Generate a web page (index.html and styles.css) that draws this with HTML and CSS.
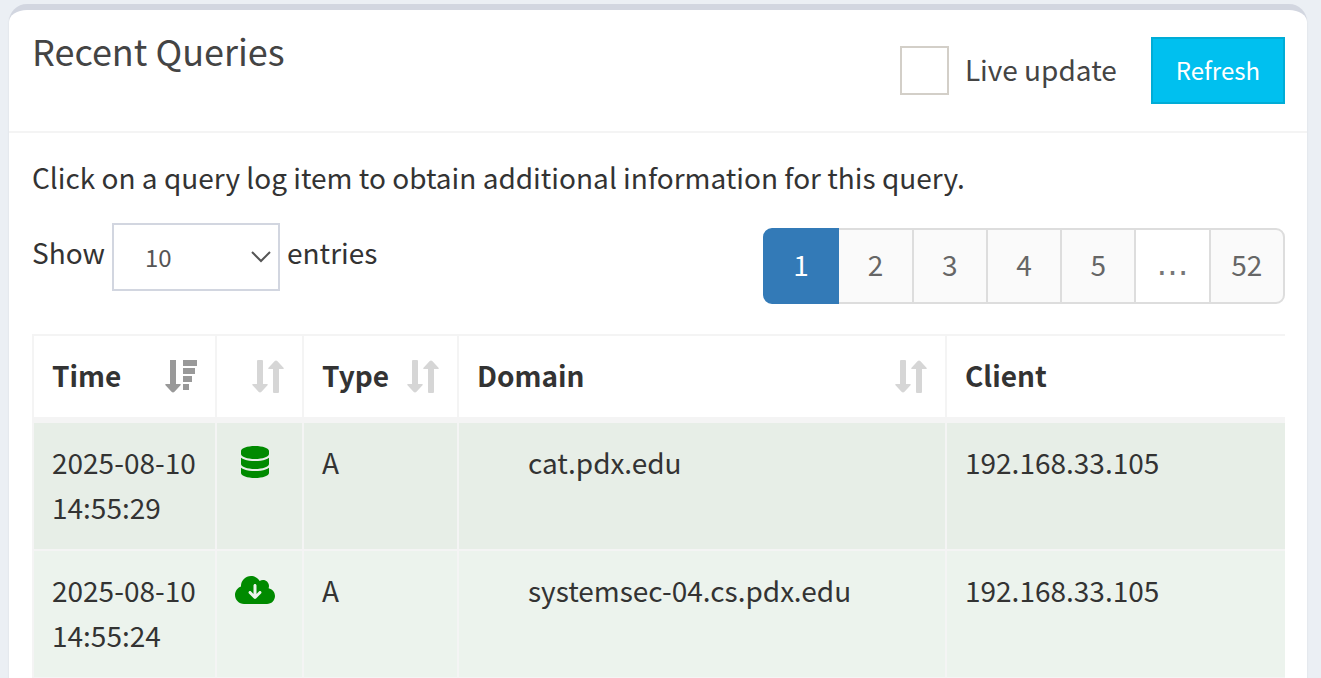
FILE: index.html
```html
<!DOCTYPE html>
<html lang="en">
<head>
<meta charset="utf-8">
<title>Recent Queries</title>
<link rel="stylesheet" href="styles.css">
</head>
<body>
<svg class="sprite" aria-hidden="true">
  <symbol id="sort" viewBox="0 0 32 34">
    <path d="M5 2a1 1 0 0 1 1-1h4a1 1 0 0 1 1 1v23h4q1.500 0 .5 1.200L9.500 32.800Q8 34.400 6.500 32.800L.5 26.200Q-.5 25 1 25h4z"/>
    <path d="M21 33a1 1 0 0 0 1 1h4a1 1 0 0 0 1-1V10h4q1.500 0 .5-1.200L25.500 2.200Q24 .6 22.500 2.200L16.500 8.800Q15.500 10 17 10h4z"/>
  </symbol>
  <symbol id="sort-desc" viewBox="0 0 32 34">
    <path d="M5 1h6v24h4q1.500 0 .5 1.200L9.500 32.800Q8 34.400 6.500 32.800L.5 26.200Q-.5 25 1 25h4zM18 1h14v6H18zM18 9h12v6H18zM18 17h9v6h-9zM18 25h6v6h-6z"/>
  </symbol>
  <symbol id="database" viewBox="0 0 448 512">
    <path d="M448 80v48c0 44.200-100.300 80-224 80S0 172.200 0 128V80C0 35.800 100.300 0 224 0S448 35.800 448 80zM393.200 214.700c20.800-7.400 39.900-16.900 54.800-28.600V288c0 44.200-100.300 80-224 80S0 332.200 0 288V186.100c14.900 11.800 34 21.200 54.800 28.600C99.700 230.700 159.500 240 224 240s124.300-9.300 169.200-25.300zM0 346.100c14.900 11.800 34 21.200 54.800 28.600C99.700 390.700 159.500 400 224 400s124.300-9.300 169.200-25.300c20.800-7.400 39.900-16.900 54.800-28.600V432c0 44.200-100.300 80-224 80S0 476.200 0 432V346.100z"/>
  </symbol>
  <symbol id="cloud-down" viewBox="0 0 640 512">
    <path d="M144 480C64.500 480 0 415.500 0 336c0-62.800 40.200-116.200 96.200-135.900c-.1-2.700-.2-5.400-.2-8.100c0-88.400 71.600-160 160-160c59.300 0 111 32.200 138.700 80.200C409.900 102 428.300 96 448 96c53 0 96 43 96 96c0 12.200-2.300 23.800-6.400 34.600C596 238.400 640 290.100 640 352c0 70.700-57.300 128-128 128H144zm79-167l80 80c9.400 9.400 24.600 9.400 33.900 0l80-80c9.400-9.400 9.400-24.600 0-33.900s-24.600-9.400-33.900 0l-39 39V184c0-13.300-10.700-24-24-24s-24 10.700-24 24V318.100l-39-39c-9.400-9.400-24.600-9.400-33.900 0s-9.400 24.600 0 33.900z"/>
  </symbol>
</svg>
<main class="box">
  <header class="box-header">
    <h1 class="box-title">Recent Queries</h1>
    <div class="box-tools">
      <label class="live"><input class="live-check" type="checkbox"><span class="live-text">Live update</span></label>
      <button class="refresh" type="button">Refresh</button>
    </div>
  </header>
  <div class="box-body">
    <p class="hint">Click on a query log item to obtain additional information for this query.</p>
    <div class="controls">
      <div class="length">
        <label class="length-text" for="length">Show</label>
        <span class="select-wrap">
          <select class="length-select" id="length"><option>10</option><option>25</option><option>50</option><option>100</option></select>
          <svg class="chevron" viewBox="0 0 20 12" aria-hidden="true"><path d="M1 1l9 9 9-9"/></svg>
        </span>
        <span class="length-text">entries</span>
      </div>
      <nav class="pages" aria-label="Pages">
        <a class="page page-active" href="#1">1</a>
        <a class="page" href="#2">2</a>
        <a class="page" href="#3">3</a>
        <a class="page" href="#4">4</a>
        <a class="page" href="#5">5</a>
        <span class="page page-gap">…</span>
        <a class="page" href="#52">52</a>
      </nav>
    </div>
    <div class="table-wrap">
      <table class="queries">
        <colgroup><col class="c-time"><col class="c-status"><col class="c-type"><col class="c-domain"><col class="c-client"></colgroup>
        <thead>
          <tr>
            <th><div class="head">Time<svg class="sort sort-on"><use href="#sort-desc"/></svg></div></th>
            <th><div class="head head-end"><svg class="sort"><use href="#sort"/></svg></div></th>
            <th><div class="head">Type<svg class="sort"><use href="#sort"/></svg></div></th>
            <th><div class="head">Domain<svg class="sort"><use href="#sort"/></svg></div></th>
            <th><div class="head">Client</div></th>
          </tr>
        </thead>
        <tbody>
          <tr>
            <td>2025-08-10 14:55:29</td>
            <td><svg class="status"><use href="#database"/></svg></td>
            <td>A</td>
            <td class="domain">cat.pdx.edu</td>
            <td>192.168.33.105</td>
          </tr>
          <tr>
            <td>2025-08-10 14:55:24</td>
            <td><svg class="status"><use href="#cloud-down"/></svg></td>
            <td>A</td>
            <td class="domain">systemsec-04.cs.pdx.edu</td>
            <td>192.168.33.105</td>
          </tr>
        </tbody>
      </table>
    </div>
  </div>
</main>
</body>
</html>
```

FILE: styles.css
```css
* { box-sizing: border-box; }

html { overflow: hidden; }

body {
  margin: 0;
  padding: 4px 14px 0 9px;
  background: #ebeff4;
  color: #333;
  font-family: "Noto Sans CJK SC", "Open Sans", sans-serif;
  font-size: 28px;
  line-height: 45px;
}

.sprite { display: none; }

.box {
  min-height: 100vh;
  background: #fff;
  border-top: 6px solid #d2d6e0;
  border-radius: 18px 18px 0 0;
  box-shadow: 0 2px 2px rgba(0, 0, 0, .1);
}

.box-header {
  display: flex;
  justify-content: space-between;
  align-items: flex-start;
  padding: 22px 22px 27px 23px;
  border-bottom: 2px solid #f4f4f4;
  color: #444;
}

.box-title {
  margin: 0;
  font-size: 36px;
  font-weight: 400;
  line-height: 36px;
}

.box-tools {
  display: flex;
  align-items: center;
  gap: 34px;
  padding-top: 5px;
}

.live {
  display: flex;
  align-items: center;
  gap: 16px;
}

.live-text { padding-bottom: 2px; }

.live-check {
  appearance: none;
  width: 49px;
  height: 49px;
  margin: 0;
  border: 2px solid #d3cfc8;
  background: #fff;
}

.refresh {
  height: 67px;
  padding: 0 23px 2px;
  border: 2px solid #00acd6;
  background: #00c0ef;
  color: #fff;
  font-family: inherit;
  font-size: 24px;
  line-height: 36px;
}

.box-body { padding: 22px 22px 22px 23px; }

.hint { margin: 0 0 23px; }

.controls {
  display: flex;
  justify-content: space-between;
  align-items: flex-start;
}

.length {
  display: flex;
  align-items: center;
  gap: 7px;
}

.length-text { margin-bottom: 10px; }

.select-wrap {
  display: grid;
  align-items: center;
}

.length-select {
  grid-area: 1 / 1;
  appearance: none;
  width: 168px;
  height: 68px;
  padding: 0 31px 2px;
  border: 2px solid #d2d6e0;
  border-radius: 0;
  background: #fff;
  color: #555;
  font-family: inherit;
  font-size: 24px;
}

.chevron {
  grid-area: 1 / 1;
  justify-self: end;
  width: 20px;
  height: 12px;
  margin-right: 9px;
  fill: none;
  stroke: #555;
  stroke-width: 2;
  pointer-events: none;
}

.pages {
  display: grid;
  grid-template-columns: repeat(7, 1fr);
  width: 522px;
  margin-top: 5px;
  padding-left: 2px;
}

.page {
  height: 76px;
  margin-left: -2px;
  border: 2px solid #ddd;
  background: #fafafa;
  color: #666;
  line-height: 68px;
  text-align: center;
  text-decoration: none;
}

.page:first-child { border-radius: 9px 0 0 9px; }
.page:last-child { border-radius: 0 9px 9px 0; }

.page-active {
  position: relative;
  border-color: #337ab7;
  background: #337ab7;
  color: #fff;
}

.page-gap {
  background: #fff;
  color: #777;
  font-family: "DejaVu Sans", sans-serif;
  font-size: 32px;
}

.table-wrap {
  margin-top: 30px;
  overflow: hidden;
}

.queries {
  width: 110%;
  table-layout: fixed;
  border-collapse: separate;
  border-spacing: 0;
  border-top: 2px solid #f4f4f4;
  border-left: 2px solid #f4f4f4;
}

.c-time { width: 183px; }
.c-status { width: 87px; }
.c-type { width: 155px; }
.c-domain { width: 488px; }

.queries th,
.queries td {
  padding: 17px 18px 19px;
  border-right: 2px solid #f4f4f4;
  border-bottom: 2px solid #f4f4f4;
  text-align: left;
  vertical-align: top;
}

.queries th {
  border-bottom: 6px solid #f4f4f4;
  font-weight: 700;
}

.queries tbody tr { background: #ecf3ed; }
.queries tbody tr:nth-child(odd) { background: #e7eee7; }

.queries .domain { padding-left: 69px; }

.head {
  display: flex;
  justify-content: space-between;
  align-items: center;
}

.head-end {
  justify-content: flex-end;
  height: 45px;
}

.sort {
  width: 32px;
  height: 34px;
  fill: #d6d6d6;
}

.sort-on { fill: #999; }

.status {
  display: block;
  width: 40px;
  height: 32px;
  margin-top: 6px;
  fill: #008a00;
}
```
